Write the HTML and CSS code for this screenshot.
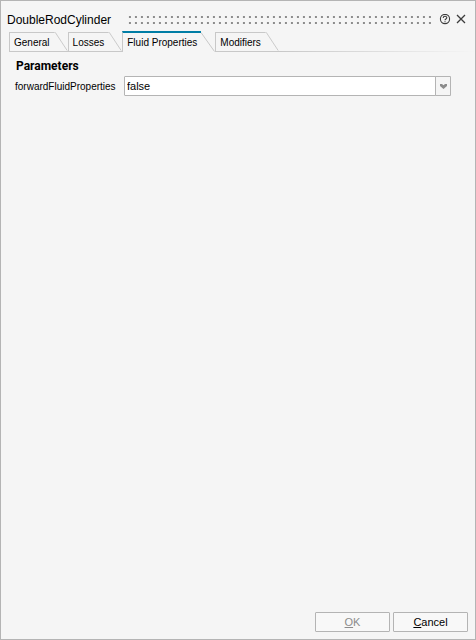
FILE: index.html
```html
<!DOCTYPE html>
<html lang="en">
<head>
  <meta charset="UTF-8" />
  <meta name="viewport" content="width=device-width, initial-scale=1.0" />
  <title>DoubleRodCylinder</title>
  <link rel="stylesheet" href="styles.css">
</head>
<body>
  <div class="dialog">
    <header class="title-bar">
      <h1>DoubleRodCylinder</h1>
      <div class="grip"></div>
      <button class="icon-btn" aria-label="Help">
        <svg width="12" height="12" viewBox="0 0 12 12" fill="none" stroke="#3c3c3c">
          <circle cx="6" cy="5" r="4.6" stroke-width="1.1" />
          <path d="M4.2 3.9C4.2 1.8 7.8 1.8 7.8 3.8C7.8 5 6 5 6 6.3M6 7.2V8.3" stroke-width="1.1" />
        </svg>
      </button>
      <button class="icon-btn" aria-label="Close">
        <svg width="12" height="12" viewBox="0 0 12 12" fill="none" stroke="#3c3c3c">
          <path d="M2 1L10 9M10 1L2 9" stroke-width="1.3" />
        </svg>
      </button>
    </header>

    <nav class="tabs" role="tablist">
      <button class="tab" role="tab">
        <span class="tab-label">General</span>
        <svg class="tab-slope" width="14" height="20" viewBox="0 0 14 20"><path d="M0 .5H1L13.5 19.5" /></svg>
      </button>
      <button class="tab" role="tab">
        <span class="tab-label">Losses</span>
        <svg class="tab-slope" width="14" height="20" viewBox="0 0 14 20"><path d="M0 .5H1L13.5 19.5" /></svg>
      </button>
      <button class="tab active" role="tab" aria-selected="true">
        <span class="tab-label">Fluid Properties</span>
        <svg class="tab-slope" width="14" height="20" viewBox="0 0 14 20"><path d="M0 .5L13.5 19.5" /></svg>
      </button>
      <button class="tab" role="tab">
        <span class="tab-label">Modifiers</span>
        <svg class="tab-slope" width="14" height="20" viewBox="0 0 14 20"><path d="M0 .5H1L13.5 19.5" /></svg>
      </button>
      <div class="tab-line"></div>
    </nav>

    <main class="panel">
      <h2>Parameters</h2>
      <div class="field">
        <label for="forwardFluid">forwardFluidProperties</label>
        <div class="combo">
          <select id="forwardFluid">
            <option selected>false</option>
            <option>true</option>
          </select>
          <span class="combo-arrow">
            <svg width="7" height="5" viewBox="0 0 7 5"><path d="M0 0H2L3.5 1.2L5 0H7V2L3.5 5L0 2Z" fill="#8c8c8c" /></svg>
          </span>
        </div>
      </div>
    </main>

    <footer class="actions">
      <button class="btn" disabled><u>O</u>K</button>
      <button class="btn"><u>C</u>ancel</button>
    </footer>
  </div>
</body>
</html>
```
FILE: styles.css
```css
:root {
  --background: #f5f5f5;
  --border-color: #b4b4b4;
  --tab-border: #c8c8c8;
  --accent-color: #007da5;
  --text-color: #000;
}

* {
  box-sizing: border-box;
}

body {
  margin: 0;
  background-color: var(--background);
  color: var(--text-color);
  font-family: "Liberation Sans", Arial, sans-serif;
  font-size: 11px;
}

button,
select {
  font: inherit;
  color: inherit;
}

.dialog {
  display: flex;
  flex-direction: column;
  min-height: 100vh;
  border: 1px solid var(--border-color);
}

.title-bar {
  display: flex;
  align-items: center;
  height: 30px;
  padding: 8px 8px 0 6px;
}

.title-bar h1 {
  margin: 0;
  font-size: 12px;
  font-weight: normal;
  line-height: 14px;
}

.grip {
  flex: 1;
  height: 8px;
  margin: 0 8px 0 14px;
  background-image: conic-gradient(from 270deg at 2px 2px, #8c8c8c 90deg, transparent 0);
  background-position: right 2px top 0;
  background-size: 6px 6px;
}

.icon-btn {
  display: flex;
  width: 12px;
  height: 12px;
  padding: 0;
  border: none;
  background: none;
}

.icon-btn + .icon-btn {
  margin-left: 4px;
}

.tabs {
  display: flex;
  align-items: flex-end;
  height: 21px;
  padding-left: 8px;
}

.tab {
  display: flex;
  height: 20px;
  padding: 0;
  border: none;
  background: none;
}

.tab-label {
  height: 20px;
  padding: 0 4px;
  border: 1px solid var(--tab-border);
  border-right: none;
  font-size: 10px;
  line-height: 20px;
}

.tab-slope {
  fill: none;
  stroke: var(--tab-border);
  border-bottom: 1px solid var(--tab-border);
}

.tab.active {
  height: 21px;
  align-items: flex-end;
}

.tab.active .tab-label {
  height: 21px;
  border-top: 2px solid var(--accent-color);
  border-bottom: none;
}

.tab.active .tab-slope {
  border-bottom: none;
}

.tab-line {
  flex: 1;
  height: 1px;
  background: linear-gradient(to right, var(--tab-border), transparent);
}

.panel {
  flex: 1;
  padding: 7px 24px 0 14px;
}

.panel h2 {
  margin: 0 0 3px 1px;
  font-family: Roboto, sans-serif;
  font-size: 12px;
  line-height: 14px;
}

.field {
  display: flex;
  align-items: center;
}

.field label {
  flex: 0 0 109px;
  font-size: 10px;
}

.combo {
  display: grid;
  flex: 1;
}

.combo select {
  grid-area: 1 / 1;
  height: 20px;
  padding: 0 17px 0 2px;
  border: 1px solid var(--border-color);
  border-radius: 1px;
  background-color: #fff;
  appearance: none;
}

.combo-arrow {
  display: flex;
  grid-area: 1 / 1;
  justify-self: end;
  align-items: center;
  justify-content: center;
  width: 16px;
  border: 1px solid var(--border-color);
  border-radius: 1px;
  background-color: var(--background);
  pointer-events: none;
}

.actions {
  display: flex;
  justify-content: flex-end;
  gap: 3px;
  padding: 0 7px 7px;
}

.btn {
  width: 75px;
  height: 20px;
  padding: 0;
  border: 1px solid var(--border-color);
  border-radius: 1px;
  background-color: #f8f8f8;
}

.btn:disabled {
  color: #8c8c8c;
}
```
